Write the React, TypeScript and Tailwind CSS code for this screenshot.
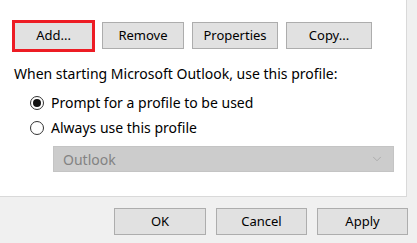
import { ChevronDown } from 'lucide-react';

const font = { fontFamily: '"Noto Sans", "Open Sans", sans-serif' };

const Btn = ({ label, w }: { label: string; w: string }) => (
  <button className={`${w} h-[27px] shrink-0 bg-[#e1e1e1] border border-[#adadad] text-[13px] text-black leading-none flex items-center justify-center`}>
    {label}
  </button>
);

const Radio = ({ checked, label }: { checked?: boolean; label: string }) => (
  <label className="flex items-center gap-[7px] h-[25px]">
    <span className="w-[14px] h-[14px] shrink-0 rounded-full border border-[#333] bg-white flex items-center justify-center">
      {checked && <span className="w-[8px] h-[8px] rounded-full bg-[#111]" />}
    </span>
    <span className="text-[14px] leading-[18px] text-black">{label}</span>
  </label>
);

export default function App() {
  return (
    <div className="w-[417px] h-[243px] bg-[#f0f0f0] overflow-hidden" style={font}>
      <div className="w-[407px] h-[197px] bg-white border-r border-b border-[#d9d9d9] pl-[12px] pt-[20px]">
        {/* profile buttons */}
        <div className="flex items-start gap-[7px] h-[32px]">
          <div className="w-[83px] h-[32px] shrink-0 border-[3px] border-[#ed1c24] bg-[#e1e1e1] text-[13px] text-black flex items-center justify-center">
            Add...
          </div>
          <div className="flex gap-[8px] mt-[2px]">
            <Btn label="Remove" w="w-[82px]" />
            <Btn label="Properties" w="w-[86px]" />
            <Btn label="Copy..." w="w-[86px]" />
          </div>
        </div>
        <p className="mt-[13px] ml-[2px] text-[14px] leading-[18px] text-black">
          When starting Microsoft Outlook, use this profile:
        </p>
        <div className="ml-[18px] mt-[7px]">
          <Radio checked label="Prompt for a profile to be used" />
          <Radio label="Always use this profile" />
        </div>
        <div className="ml-[41px] mt-[6px] w-[341px] h-[26px] bg-[#cccccc] border border-[#c4c4c4] flex items-center justify-between pl-[9px] pr-[9px]">
          <span className="text-[14px] text-[#838383]">Outlook</span>
          <ChevronDown className="w-[14px] h-[14px] text-[#a0a0a0]" strokeWidth={1.25} />
        </div>
      </div>
      {/* dialog buttons */}
      <div className="flex justify-end gap-[10px] pr-[9px] pt-[11px]">
        <Btn label="OK" w="w-[92px]" />
        <Btn label="Cancel" w="w-[91px]" />
        <Btn label="Apply" w="w-[91px]" />
      </div>
    </div>
  );
}
